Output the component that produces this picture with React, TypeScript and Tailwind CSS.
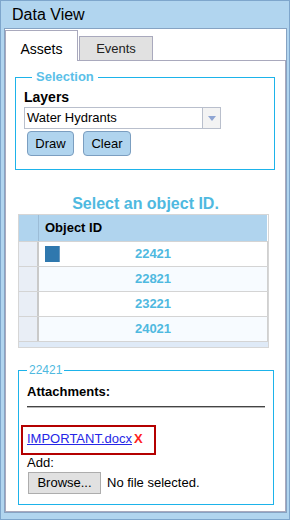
import React from 'react';

const ids = ['22421', '22821', '23221', '24021'];

export default function App() {
    return (
        <div className="w-[290px] h-[520px] bg-[#b1d5ef] border border-[#7ea6cc] flex flex-col pl-[3px] pr-[2px] pb-[6px] font-['Liberation_Sans',Arial,sans-serif] text-black">
            <div className="h-[27px] flex items-center pl-[8px] text-[16px] leading-[18px]">Data View</div>

            <div className="flex-1 bg-white border border-[#86a3c3] flex flex-col pt-px">
                {/* tabs */}
                <div className="flex items-end gap-px">
                    <div className="relative z-10 -mb-px w-[73px] h-[31px] bg-white border border-b-0 border-[#a9a9bd] flex items-end justify-center pb-[3px] text-[14px] leading-[18px]">
                        Assets
                    </div>
                    <div className="-mb-px w-[74px] h-[25px] bg-[#e1e1e1] border border-[#a9a9bd] flex items-end justify-center pb-[2px] text-[13px] leading-[18px] text-[#222]">
                        Events
                    </div>
                </div>

                <div className="flex-1 border border-[#a9a9bd] flex flex-col">
                    {/* Selection */}
                    <fieldset className="mt-[8px] ml-[9px] w-[260px] border border-[#1db3ea] pl-[8px] pb-[13px]">
                        <legend className="ml-[8px] px-[4px] text-[13px] leading-[16px] font-bold text-[#5bc0e8]">Selection</legend>
                        <div className="pt-[3px] text-[14px] leading-[18px] font-bold">Layers</div>
                        <div className="mt-px w-[197px] h-[22px] border border-[#b9bfcc] flex">
                            <div className="flex-1 flex items-center pl-[2px] text-[13px]">Water Hydrants</div>
                            <div className="w-[18px] border-l border-[#b9bfcc] bg-[#f3f3f3] flex items-center justify-center">
                                <svg width="8" height="5" viewBox="0 0 8 5">
                                    <path d="M0 0 H8 L4 5 Z" fill="#8fa5d3" />
                                </svg>
                            </div>
                        </div>
                        <div className="mt-[2px] ml-[3px] flex gap-[9px]">
                            <button className="w-[47px] h-[25px] bg-[#b0d4ee] border border-[#7b9ec0] rounded-[4px] text-[13px]">Draw</button>
                            <button className="w-[48px] h-[25px] bg-[#b0d4ee] border border-[#7b9ec0] rounded-[4px] text-[13px]">Clear</button>
                        </div>
                    </fieldset>

                    <div className="mt-[24px] text-center text-[16px] leading-[20px] font-bold text-[#4fb9e0]">Select an object ID.</div>

                    {/* grid */}
                    <div className="ml-[12px] w-[251px] border border-[#d6d6d6]">
                        <div className="h-[26px] flex bg-[#b0d4ee] mr-px">
                            <div className="w-[20px] border-r border-[#9cbcd6]" />
                            <div className="flex-1 flex items-center pl-[6px] text-[13px] font-bold">Object ID</div>
                        </div>
                        {ids.map((id, i) => (
                            <div key={id} className="h-[25px] flex border-t border-[#d4d4d4]">
                                <div className="w-[20px] bg-[#e9eef6] border-r-2 border-[#c9c9c9]" />
                                <div className={`flex-1 grid grid-cols-[1fr_auto_1fr] items-center border-r border-[#d0d0d0] ${i % 2 ? 'bg-[#f7fbff]' : 'bg-white'}`}>
                                    <div className="pl-[6px]">
                                        {i === 0 && <div className="w-[15px] h-[16px] bg-[#2f78ae] border-r border-[#6a9ac0]" />}
                                    </div>
                                    <div className="text-[13px] font-bold text-[#4fb9e0]">{id}</div>
                                    <div />
                                </div>
                            </div>
                        ))}
                        <div className="h-[6px] bg-[#dfeaf7] border-t border-[#d4d4d4]" />
                    </div>

                    {/* attachments */}
                    <fieldset className="mt-[14px] ml-[12px] w-[256px] border border-[#1db3ea] pb-[10px]">
                        <legend className="ml-[8px] px-[2px] text-[12px] leading-[16px] text-[#4fb9e0]">22421</legend>
                        <div className="ml-[8px] pt-[6px] text-[13px] leading-[16px] font-bold">Attachments:</div>
                        <div className="ml-[8px] mr-[8px] mt-[6px] border-t border-b border-t-[#444] border-b-[#b5b5b5]" />
                        <div className="ml-[2px] mt-[17px] w-[135px] h-[30px] border-2 border-[#b40000] pl-[4px] pt-[3px] text-[13px] leading-[18px]">
                            <a className="text-[#2626e6] underline">IMPORTANT.docx</a>
                            <span className="ml-[2px] font-bold text-[#ff2020]">X</span>
                        </div>
                        <div className="ml-[8px] text-[13px] leading-[16px]">Add:</div>
                        <div className="ml-[9px] mt-px flex items-center gap-[6px] text-[13px]">
                            <button className="w-[73px] h-[22px] bg-[#e1e1e1] border border-[#adadad] text-[13px]">Browse...</button>
                            <span>No file selected.</span>
                        </div>
                    </fieldset>
                </div>
            </div>
        </div>
    );
}
